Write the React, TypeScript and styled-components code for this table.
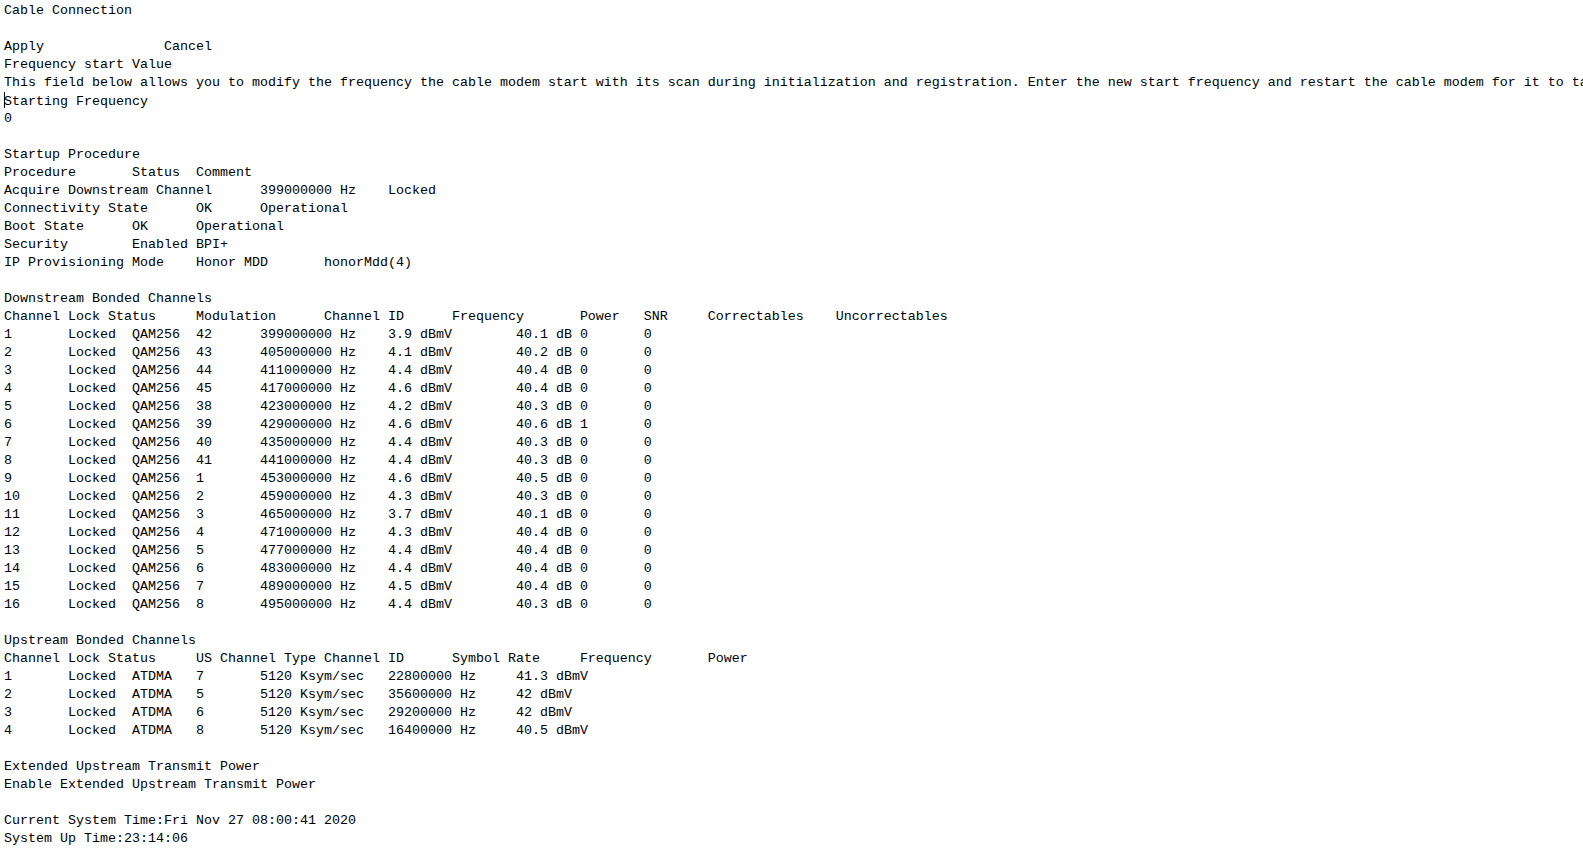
import React from "react";
import styled, { createGlobalStyle } from "styled-components";

const GlobalStyle = createGlobalStyle`
  html, body {
    margin: 0;
    padding: 0;
    background: #ffffff;
    overflow: hidden;
  }
`;

const Editor = styled.div`
  display: flex;
  flex-direction: column;
  padding: 2px 0 0 4px;
  width: 1583px;
  height: 848px;
  box-sizing: border-box;
  overflow: hidden;
  background: #ffffff;
  color: #000000;
  font-family: "Liberation Mono", "DejaVu Sans Mono", monospace;
  font-size: 13.3333px;
  cursor: text;
`;

const Line = styled.div`
  flex: 0 0 18px;
  height: 18px;
  line-height: 18px;
  white-space: pre;
  tab-size: 8;
  -moz-tab-size: 8;
`;

const Caret = styled.span`
  display: inline-block;
  width: 1px;
  height: 16px;
  margin-right: -1px;
  vertical-align: -3px;
  background: #000000;
`;

const T = "\t";

const downstream: [string, string, string, string, string][] = [
  ["1", "42", "399000000", "3.9", "40.1"],
  ["2", "43", "405000000", "4.1", "40.2"],
  ["3", "44", "411000000", "4.4", "40.4"],
  ["4", "45", "417000000", "4.6", "40.4"],
  ["5", "38", "423000000", "4.2", "40.3"],
  ["6", "39", "429000000", "4.6", "40.6"],
  ["7", "40", "435000000", "4.4", "40.3"],
  ["8", "41", "441000000", "4.4", "40.3"],
  ["9", "1", "453000000", "4.6", "40.5"],
  ["10", "2", "459000000", "4.3", "40.3"],
  ["11", "3", "465000000", "3.7", "40.1"],
  ["12", "4", "471000000", "4.3", "40.4"],
  ["13", "5", "477000000", "4.4", "40.4"],
  ["14", "6", "483000000", "4.4", "40.4"],
  ["15", "7", "489000000", "4.5", "40.4"],
  ["16", "8", "495000000", "4.4", "40.3"],
];

const correctables: Record<string, string> = { "6": "1" };

const upstream: [string, string, string, string][] = [
  ["1", "7", "22800000", "41.3"],
  ["2", "5", "35600000", "42"],
  ["3", "6", "29200000", "42"],
  ["4", "8", "16400000", "40.5"],
];

const lines: string[] = [
  "Cable Connection",
  "",
  "Apply               Cancel",
  "Frequency start Value",
  "This field below allows you to modify the frequency the cable modem start with its scan during initialization and registration. Enter the new start frequency and restart the cable modem for it to take effect.",
  "@@CARET@@Starting Frequency",
  "0",
  "",
  "Startup Procedure",
  ["Procedure", "Status", "Comment"].join(T),
  ["Acquire Downstream Channel", "399000000 Hz", "Locked"].join(T),
  ["Connectivity State", "OK", "Operational"].join(T),
  ["Boot State", "OK", "Operational"].join(T),
  ["Security", "Enabled", "BPI+"].join(T),
  ["IP Provisioning Mode", "Honor MDD", "honorMdd(4)"].join(T),
  "",
  "Downstream Bonded Channels",
  [
    "Channel",
    "Lock Status",
    "Modulation",
    "Channel ID",
    "Frequency",
    "Power",
    "SNR",
    "Correctables",
    "Uncorrectables",
  ].join(T),
  ...downstream.map(([ch, id, freq, pwr, snr]) =>
    [
      ch,
      "Locked",
      "QAM256",
      id,
      `${freq} Hz`,
      `${pwr} dBmV`,
      `${snr} dB`,
      correctables[ch] ?? "0",
      "0",
    ].join(T)
  ),
  "",
  "Upstream Bonded Channels",
  [
    "Channel",
    "Lock Status",
    "US Channel Type",
    "Channel ID",
    "Symbol Rate",
    "Frequency",
    "Power",
  ].join(T),
  ...upstream.map(([ch, id, freq, pwr]) =>
    [ch, "Locked", "ATDMA", id, "5120 Ksym/sec", `${freq} Hz`, `${pwr} dBmV`].join(T)
  ),
  "",
  "Extended Upstream Transmit Power",
  "Enable Extended Upstream Transmit Power",
  "",
  "Current System Time:Fri Nov 27 08:00:41 2020",
  "System Up Time:23:14:06",
];

export default function App() {
  return (
    <>
      <GlobalStyle />
      <Editor>
        {lines.map((text, i) =>
          text.startsWith("@@CARET@@") ? (
            <Line key={i}>
              <Caret />
              {text.slice(9)}
            </Line>
          ) : (
            <Line key={i}>{text}</Line>
          )
        )}
      </Editor>
    </>
  );
}
